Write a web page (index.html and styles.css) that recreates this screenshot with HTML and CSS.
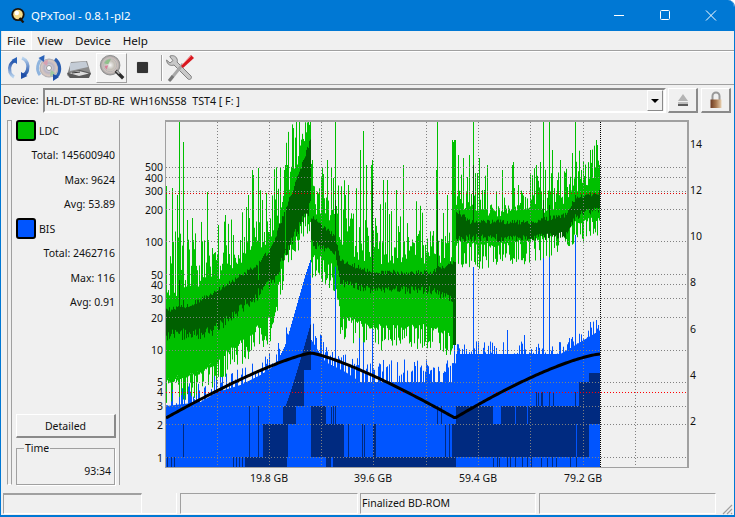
FILE: index.html
```html
<!DOCTYPE html>
<html lang="en">
<head>
<meta charset="utf-8">
<title>QPxTool - 0.8.1-pl2</title>
<link rel="stylesheet" href="styles.css">
</head>
<body>
<div class="window">
  <header class="titlebar">
    <svg class="app-icon" viewBox="0 0 16 16" width="16" height="16"><circle cx="8" cy="7.5" r="6.6" fill="#1a1208"/><circle cx="8" cy="7.5" r="4.8" fill="#f6dc8a"/><circle cx="6.8" cy="6" r="2.2" fill="#fff"/><path d="M9.5 11 13.5 15.5" stroke="#1a1208" stroke-width="2.2"/></svg>
    <span class="title-text">QPxTool - 0.8.1-pl2</span>
    <div class="caption">
      <svg class="cap-btn" viewBox="0 0 46 31" width="46" height="31"><path d="M18 15.5h10" stroke="#fff" fill="none"/></svg>
      <svg class="cap-btn" viewBox="0 0 46 31" width="46" height="31"><rect x="18.5" y="10.5" width="9" height="9" rx="1" stroke="#fff" fill="none"/></svg>
      <svg class="cap-btn" viewBox="0 0 46 31" width="46" height="31"><path d="M18 10.5 28 20.5M28 10.5 18 20.5" stroke="#fff" fill="none"/></svg>
    </div>
  </header>

  <nav class="menubar">
    <span class="menu-item menu-active">File</span>
    <span class="menu-item">View</span>
    <span class="menu-item">Device</span>
    <span class="menu-item">Help</span>
  </nav>

  <div class="toolbar">
    <span class="tool">
      <svg viewBox="0 0 30 30" width="30" height="30"><defs><linearGradient id="ga" x1="0" y1="0" x2="0" y2="1"><stop offset="0" stop-color="#b9d4ee"/><stop offset="1" stop-color="#1f4fa8"/></linearGradient><linearGradient id="gb" x1="0" y1="1" x2="0" y2="0"><stop offset="0" stop-color="#b9d4ee"/><stop offset="1" stop-color="#1f4fa8"/></linearGradient></defs>
      <path d="M12 7.500C6.500 9 4.500 14 6 19.500c.8 2 2 3.500 4 4.500" fill="none" stroke="url(#gb)" stroke-width="3.200"/><path d="M13 4 13 11 7.500 7z" fill="#2a62b8"/><path d="M18 5c5 2 7 7 5.500 12-.5 2-2 4-4 5" fill="none" stroke="url(#ga)" stroke-width="3.200"/><path d="M17 26 17 19 23.500 23z" fill="#1f4fa8"/></svg>
    </span>
    <span class="tool">
      <svg viewBox="0 0 30 30" width="30" height="30"><defs><radialGradient id="cd"><stop offset="0" stop-color="#f4f4f4"/><stop offset=".5" stop-color="#b8b4c4"/><stop offset=".8" stop-color="#d8c8c0"/><stop offset="1" stop-color="#a8a8b0"/></radialGradient></defs>
      <circle cx="15" cy="15" r="9.500" fill="url(#cd)"/><path d="M9 10c1-2 3-3 5-3l-1 6z" fill="#d8a0b0"/><path d="M21 20c-1 2-3 3-5 3l1-6z" fill="#a0c8a0"/><circle cx="15" cy="15" r="2.500" fill="#fff" stroke="#999"/><path d="M9 5C3 9 2 17 6 22" fill="none" stroke="#8fb4de" stroke-width="3"/><path d="M10.500 2 10 9 4.500 5z" fill="#2a62b8"/><path d="M21 6c5 4 6 11 3 16-1 1-2 2-4 3" fill="none" stroke="#2a5eb0" stroke-width="3"/><path d="M19 28 19 21 25 24z" fill="#1f4fa8"/></svg>
    </span>
    <span class="tool">
      <svg viewBox="0 0 30 30" width="30" height="30"><path d="M3 22 7 9l16-1 4 13-3 4H6z" fill="#8c8c8c"/><path d="M6 10 22 8.500 24 14 6 18z" fill="#c4ccd6"/><path d="M3 20 16 17 27 20 25 25H6z" fill="#5a5a5a"/><path d="M5 20 15 18 25 20.500 15 23z" fill="#dcdcdc"/><path d="M8 20 16 19" stroke="#333"/></svg>
    </span>
    <span class="tool tool-raised">
      <svg viewBox="0 0 30 30" width="28" height="28"><defs><radialGradient id="lens"><stop offset="0" stop-color="#f6f6f6"/><stop offset=".45" stop-color="#c4c0b8"/><stop offset=".7" stop-color="#d5c8c4"/><stop offset="1" stop-color="#9a9a9a"/></radialGradient></defs>
      <circle cx="13" cy="12" r="10.500" fill="url(#lens)" stroke="#8d8d8d"/><path d="M6 10c2-4 5-5 8-5l-3 6z" fill="#8fc08a"/><path d="M7 13l4-1-2 5z" fill="#d87f9a"/><circle cx="13" cy="12" r="7" fill="none" stroke="#b5b5b5"/><path d="M19 18 27 26" stroke="#2c2c2c" stroke-width="3.600"/><path d="M20 18 23 21" stroke="#b0b0b0" stroke-width="2"/></svg>
    </span>
    <span class="tool tool-stop"><span class="stop-square"></span></span>
    <span class="tool-sep"></span>
    <span class="tool">
      <svg viewBox="0 0 30 30" width="30" height="30"><path d="M5 3c3-1 6 0 7 3 .5 1 .5 2 0 3l14 14c1.500 2-1 4.500-3 3L9 12c-3 1-6 0-7-3l-.5-2 3.500 3 3-2.500L5 4z" fill="#c8c8c8" stroke="#808080"/><path d="M5 27 18 11" stroke="#a8a8a8" stroke-width="3"/><path d="M4 28 8 23" stroke="#777" stroke-width="3"/><path d="M16 13 26 2l3 3-11 10z" fill="#d81820"/><path d="M17 12 26 3" stroke="#f07070"/></svg>
    </span>
  </div>

  <div class="device-row">
    <span class="device-label">Device:</span>
    <div class="combo">
      <span class="combo-text">HL-DT-ST BD-RE&nbsp; WH16NS58&nbsp; TST4 [ F: ]</span>
      <span class="combo-btn"><span class="combo-arrow"></span></span>
    </div>
    <span class="square-btn">
      <svg viewBox="0 0 16 16" width="16" height="16"><path d="M8 2 13 9H3z" fill="#b4b4b4"/><rect x="3" y="10" width="10" height="2" fill="#bdbdbd"/><rect x="3" y="12" width="10" height="2" fill="#5c5c5c"/></svg>
    </span>
    <span class="square-btn square-btn-lock">
      <svg viewBox="0 0 16 18" width="16" height="18"><path d="M4.500 9V5a3.500 3.500 0 0 1 7 0v4" fill="none" stroke="#999" stroke-width="2"/><defs><linearGradient id="lk"><stop offset="0" stop-color="#6c3a22"/><stop offset=".5" stop-color="#a87850"/><stop offset="1" stop-color="#e8d0b0"/></linearGradient></defs><rect x="2.500" y="8.500" width="11" height="8.500" fill="url(#lk)"/></svg>
    </span>
  </div>

  <main class="main">
    <div class="strip"></div>
    <aside class="panel">
      <div class="legend"><span class="swatch swatch-ldc"></span><span>LDC</span></div>
      <div class="stat">Total: 145600940</div>
      <div class="stat">Max: 9624</div>
      <div class="stat">Avg: 53.89</div>
      <div class="legend legend-bis"><span class="swatch swatch-bis"></span><span>BIS</span></div>
      <div class="stat">Total: 2462716</div>
      <div class="stat">Max: 116</div>
      <div class="stat">Avg: 0.91</div>
      <button class="detail-btn">Detailed</button>
      <fieldset class="time-box">
        <legend class="time-legend">Time</legend>
        <div class="time-value">93:34</div>
      </fieldset>
    </aside>
    <section class="chart">
      <canvas id="plot" class="plot" width="521" height="345"></canvas>
      <span class="tick-l" style="top:167px">500</span>
      <span class="tick-l" style="top:178px">400</span>
      <span class="tick-l" style="top:191px">300</span>
      <span class="tick-l" style="top:210px">200</span>
      <span class="tick-l" style="top:242px">100</span>
      <span class="tick-l" style="top:275px">50</span>
      <span class="tick-l" style="top:285px">40</span>
      <span class="tick-l" style="top:299px">30</span>
      <span class="tick-l" style="top:318px">20</span>
      <span class="tick-l" style="top:350px">10</span>
      <span class="tick-l" style="top:382px">5</span>
      <span class="tick-l" style="top:392px">4</span>
      <span class="tick-l" style="top:406px">3</span>
      <span class="tick-l" style="top:425px">2</span>
      <span class="tick-l" style="top:458px">1</span>
      <span class="tick-r" style="top:144px">14</span>
      <span class="tick-r" style="top:190px">12</span>
      <span class="tick-r" style="top:236px">10</span>
      <span class="tick-r" style="top:282px">8</span>
      <span class="tick-r" style="top:329px">6</span>
      <span class="tick-r" style="top:375px">4</span>
      <span class="tick-r" style="top:421px">2</span>
      <span class="tick-b" style="left:269px">19.8 GB</span>
      <span class="tick-b" style="left:373px">39.6 GB</span>
      <span class="tick-b" style="left:478px">59.4 GB</span>
      <span class="tick-b" style="left:583px">79.2 GB</span>
    </section>
  </main>

  <footer class="statusbar">
    <span class="cell cell-a"><span class="cell-a-inner"></span></span>
    <span class="cell cell-b"></span>
    <span class="cell cell-c">Finalized BD-ROM</span>
    <span class="cell cell-d"></span>
    <svg class="grip" viewBox="0 0 12 12" width="12" height="12"><path d="M11 2 2 11M11 6 6 11M11 10 10 11" stroke="#a0a0a0" stroke-width="1.200"/></svg>
  </footer>
</div>
<script src="chart.js"></script>
</body>
</html>
```

FILE: styles.css
```css
* { box-sizing: border-box; }
html, body { margin: 0; padding: 0; background: #fff; }
body { width: 735px; height: 517px; overflow: hidden; font-family: "Noto Sans", "Open Sans", sans-serif; font-size: 10.5px; color: #111; }

.window { width: 735px; height: 517px; background: #f0f0f0; display: flex; flex-direction: column; border-left: 1px solid #0078d4; border-right: 1px solid #0078d4; border-bottom: 2px solid #0078d4; border-top-right-radius: 7px; overflow: hidden; }

.titlebar { height: 31px; background: #0078d4; margin: 0 -1px; display: flex; align-items: center; padding-left: 10px; color: #fff; font-size: 11.4px; flex: none; }
.app-icon { margin-top: -1px; }
.title-text { margin-left: 5px; }
.caption { margin-left: auto; display: flex; margin-right: 1px; }
.cap-btn { display: block; }

.menubar { height: 19px; display: flex; flex: none; font-size: 11.6px; align-items: stretch; }
.menu-item { padding: 0 6px; line-height: 19px; }
.menu-active { background: #f7f7f7; border-right: 1px solid #fff; border-left: 1px solid #e4e4e4; padding: 0 5px; }

.toolbar { height: 35px; flex: none; display: flex; align-items: center; padding: 0 0 0 3px; border-top: 1px solid #a0a0a0; border-bottom: 1px solid #a0a0a0; box-shadow: inset 0 1px 0 #fff; }
.tool { width: 30px; height: 30px; display: flex; align-items: center; justify-content: center; flex: none; }
.tool svg { display: block; }
.tool-raised { width: 31px; height: 30px; margin-left: 2px; border: 1px solid #fff; border-right-color: #a0a0a0; border-bottom-color: #a0a0a0; background: #f2f2f2; }
.tool-stop { width: 30px; }
.stop-square { width: 11px; height: 11px; background: #333; border-radius: 1px; box-shadow: 0 0 1px #777; }
.tool-sep { width: 1px; height: 26px; background: #a0a0a0; margin: 0 3px 0 4px; box-shadow: 1px 0 0 #fff; }

.device-row { height: 32px; flex: none; display: flex; align-items: flex-start; padding: 3px 0 0 2px; }
.device-label { width: 40px; font-size: 10.6px; line-height: 25px; flex: none; }
.combo { width: 623px; height: 25px; border: 2px solid #8a8a8a; border-right-color: #fff; border-bottom-color: #fff; display: flex; align-items: center; padding-left: 1px; background: #f0f0f0; }
.combo-text { flex: 1; white-space: pre; font-size: 10.7px; }
.combo-btn { width: 16px; height: 21px; margin-right: 1px; border: 1px solid #fff; border-right-color: #8a8a8a; border-bottom-color: #8a8a8a; display: flex; align-items: center; justify-content: center; }
.combo-arrow { width: 0; height: 0; border: 4px solid transparent; border-top: 4px solid #000; margin-top: 4px; }
.square-btn { width: 30px; height: 25px; margin-left: 2px; border: 1px solid #fff; border-right: 2px solid #8a8a8a; border-bottom: 2px solid #8a8a8a; display: flex; align-items: center; justify-content: center; flex: none; }
.square-btn-lock { margin-left: 3px; }
.square-btn svg { display: block; }

.main { flex: 1; display: flex; padding-left: 6px; min-height: 0; }
.strip { width: 5px; height: 365px; border-left: 1px solid #a0a0a0; border-right: 1px solid #a0a0a0; border-top: 1px solid #a0a0a0; border-bottom: 1px solid #fff; margin-top: 3px; flex: none; }
.panel { width: 108px; height: 365px; margin-top: 3px; border-right: 1px solid #a0a0a0; padding: 0 4px; display: flex; flex-direction: column; flex: none; }
.legend { height: 21px; display: flex; align-items: center; gap: 3px; flex: none; }
.legend-bis { margin-top: 1.500px; }
.swatch { width: 20px; height: 21px; border: 2px solid #000; border-radius: 3px; display: block; flex: none; }
.swatch-ldc { background: #00c000; }
.swatch-bis { background: #0055ff; }
.stat { height: 24.500px; line-height: 24.500px; text-align: right; white-space: nowrap; flex: none; }
.legend + .stat { margin-top: 2px; }
.detail-btn { margin-top: auto; width: 100px; height: 24px; flex: none; padding: 0; font: inherit; color: inherit; background: #f0f0f0; border: 1px solid #fff; border-right: 2px solid #8a8a8a; border-bottom: 2px solid #8a8a8a; }
.time-box { margin: 3px 0 0; padding: 0 3px 0 0; width: 99px; height: 44px; border: 1px solid #a0a0a0; box-shadow: 1px 1px 0 #fff; flex: none; }
.time-legend { margin-left: 7px; padding: 0 1px; line-height: 14px; }
.time-value { text-align: right; margin-top: 8px; line-height: 16px; }

.chart { flex: 1; position: relative; min-width: 0; }
.plot { display: block; position: absolute; left: 45px; top: 3px; box-sizing: content-box; width: 521px; height: 345px; border-top: 2px solid #a0a0a0; border-right: 2px solid #a0a0a0; border-left: 1px solid #a0a0a0; border-bottom: 1px solid #a0a0a0; }
.tick-l, .tick-r, .tick-b { position: absolute; line-height: 14px; white-space: nowrap; margin-top: -117px; }
.tick-l { left: 0; width: 43px; text-align: right; transform: translateY(-7px); }
.tick-r { left: 570px; transform: translateY(-7px); }
.tick-b { top: 478px; margin-left: -120px; transform: translate(-50%, -7px); }

.statusbar { height: 24px; flex: none; display: flex; padding: 2px 0 0 2px; position: relative; }
.cell { height: 21px; border: 1px solid #a0a0a0; border-right-color: #fff; border-bottom-color: #fff; display: block; line-height: 19px; padding-left: 1px; flex: none; white-space: nowrap; }
.cell-a { width: 174px; padding: 0; border-top: 0; }
.cell-a-inner { display: block; width: 138px; height: 20px; border-top: 2px solid #a0a0a0; border-right: 1px solid #fff; }
.cell-b { width: 178px; margin-left: 3px; }
.cell-c { width: 176px; margin-left: 2px; }
.cell-d { width: 177px; margin-left: 3px; }
.grip { position: absolute; right: 1px; bottom: 0; }
```

FILE: chart.js
```js
(function () {
  var canvas = document.getElementById('plot');
  var ctx = canvas.getContext('2d');
  var OX = 166, OY = 122;
  var seed = 12345;
  function rnd() { seed = (seed * 1664525 + 1013904223) >>> 0; return seed / 4294967296; }
  function lerp(pts, x) {
    for (var i = 1; i < pts.length; i++) {
      if (x <= pts[i][0]) {
        var a = pts[i - 1], b = pts[i];
        return a[1] + (b[1] - a[1]) * (x - a[0]) / (b[0] - a[0] || 1);
      }
    }
    return pts[pts.length - 1][1];
  }
  function rect(c, x, y0, y1, w) { ctx.fillStyle = c; ctx.fillRect(x - OX, y0 - OY, w || 1, y1 - y0); }

  var upper = [[166,290],[180,285],[217,270],[240,255],[260,245],[270,230],[280,210],[290,175],[300,145],[310,121],[311,200],[335,215],[340,240],[370,255],[430,253],[453,258],[456,203],[490,205],[530,205],[560,198],[575,183],[600,170]];
  var lower = [[166,390],[200,382],[217,370],[250,343],[270,327],[285,262],[300,234],[310,215],[311,262],[335,277],[340,325],[370,336],[430,336],[453,345],[456,252],[490,255],[530,250],[575,233],[600,227]];
  var darkT = [[166,310],[190,305],[217,290],[250,270],[270,250],[285,210],[300,170],[310,140],[311,217],[335,237],[340,260],[370,272],[430,272],[453,262],[456,210],[470,222],[530,222],[565,215],[575,198],[600,192]];
  var darkB = [[166,335],[210,333],[250,300],[270,285],[285,255],[300,225],[310,207],[311,243],[335,255],[340,283],[370,290],[430,290],[453,300],[456,238],[530,238],[565,235],[575,217],[600,208]];
  var blueS = [[166,406],[200,402],[217,392],[240,385],[260,375],[275,365],[285,345],[295,310],[305,275],[310,260],[311,340],[325,362],[345,372],[360,382],[453,382],[456,354],[560,354],[575,345],[600,330]];

  var greenFix = {179:121,183:142,166:186,172:188,177:195,187:220,192:218,207:192,225:215,233:235,240:240,248:195,252:170,253:175,258:168,262:200,284:170,285:165,287:165,335:121,327:160,333:178,345:195,348:185,360:150,363:131,366:165,371:165,372:160,383:180,387:180,396:190,403:165,437:121,436:170,447:195,452:140,453:142,455:140,458:155,463:158,469:155,473:121,479:158,484:190,487:165,502:170,512:165,513:162,518:185,536:165,540:162,543:121,549:120,552:150,560:160,572:153,575:121,581:170,590:150,596:140,597:145,599:165};
  var blueFix = {172:300,179:300,335:255,359:320,363:330,372:300,454:300,473:267,543:257,549:250,575:235,507:330,524:335,590:322,596:320,598:325};
  var darkFix = {179:280,183:300,258:280,285:250,335:200,372:180,437:200,473:165,543:200,549:205,575:195};

  var x;
  // BIS
  for (x = 166; x < 600; x++) {
    var s = lerp(blueS, x), r = rnd(), t = s;
    if (x < 290) { t = s - (r < .5 ? r * 40 : 0); }
    else if (x > 310 && x < 455) { t = s - (r < .55 ? 6 + r * 30 : 0); }
    else if (x >= 456) { t = s - (r < .45 ? r * 28 : 0); }
    if (blueFix[x]) t = blueFix[x];
    rect('#0055ff', x, t, 467);
  }
  var db = '#002a80';
  function band(a, b, y0, y1) { ctx.fillStyle = db; ctx.fillRect(a - OX, y0 - OY, b - a, y1 - y0); }
  // bottom row
  band(245, 287, 457, 467); band(326, 331, 457, 467); band(333, 456, 457, 467);
  [167,171,174,233,236,239,242,493,497,499,507,510,515,522,527,531,541,547,552,556,570,576].forEach(function (p) { band(p, p + 1, 457, 467); });
  // middle row
  band(263, 288, 424, 457); band(311, 344, 424, 457); band(453, 576, 424, 457); band(577, 589, 424, 457);
  [183,249,258,348,362,364,373,374,375,445,449,452].forEach(function (p) { band(p, p + 1, 424, 457); });
  // upper row
  band(283, 296, 406, 424); band(311, 326, 406, 424); band(456, 493, 406, 424); band(501, 515, 406, 424); band(516, 527, 406, 424); band(528, 600, 406, 424);
  [249,258,331,333,335,437,441].forEach(function (p) { band(p, p + 1, 406, 424); });
  band(579, 600, 382, 406); band(589, 600, 373, 382);
  [536,538,541,542,549,553,575].forEach(function (p) { band(p, p + 1, 392, 406); });
  // peak triangle
  for (x = 285; x <= 310; x++) {
    var top = 406 - Math.pow((x - 285) / 26, 1.1) * 85;
    rect(db, x, top, x > 303 ? 370 : 406);
  }

  // LDC
  for (x = 166; x < 600; x++) {
    var u = lerp(upper, x), l = lerp(lower, x);
    var a = rnd(), b = rnd(), c = rnd(), d = rnd();
    var reach = x > 455 ? 42 : (x > 339 ? 65 : 60);
    var spike = reach * Math.pow(a, 2);
    var gt = Math.max(122, u + 12 - spike - b * 10);
    if (greenFix[x]) gt = Math.max(122, greenFix[x]);
    var gb = l + (c < .5 ? c * 30 : -c * 12);
    rect('#00c000', x, gt, gb);
    if (x < 220 && x > 166 && c > .82) rect('#00c000', x, gb, gb + d * 18);
    var dt = lerp(darkT, x) + (b - .5) * 5, dbm = lerp(darkB, x) + (d - .5) * (x < 311 ? 12 : 8);
    if (darkFix[x]) dt = Math.max(122, darkFix[x]);
    rect('#006000', x, dt, dbm);
  }
  rect('#006000', 453, 262, 345, 3);
  rect('#00c000', 454, 140, 262, 2);

  // Grid
  function hdots(y, color) { ctx.fillStyle = color; for (var p = 0; p < 521; p += 3) ctx.fillRect(p, y - OY, 1, 1); }
  function vdots(xx, color) { ctx.fillStyle = color; for (var p = 0; p < 345; p += 3) ctx.fillRect(xx - OX, p, 1, 1); }
  [167,177,191,209,241,274,284,298,317,350,382,406,424,457].forEach(function (y) { hdots(y, '#808080'); });
  [217,269,321,373,426,478,530,583,635].forEach(function (xx) { vdots(xx, '#808080'); });
  hdots(193, '#e00000'); hdots(392, '#ff0000');
  ctx.fillStyle = '#000';
  for (var p = 0; p < 345; p += 2) ctx.fillRect(600 - OX, p, 1, 1);

  // Speed line: three power-curve segments
  ctx.strokeStyle = '#000'; ctx.lineWidth = 3; ctx.lineJoin = 'round'; ctx.beginPath();
  for (x = 166; x <= 600; x += 2) {
    var y;
    if (x <= 311) y = 353 + 65 * Math.pow((311 - x) / 145, 1.25);
    else if (x <= 455) y = 353 + 65 * Math.pow((x - 311) / 144, 1.25);
    else y = 354 + 64 * Math.pow((600 - x) / 145, 1.35);
    if (x === 166) ctx.moveTo(x - OX, y - OY); else ctx.lineTo(x - OX, y - OY);
  }
  ctx.stroke();
})();
```
